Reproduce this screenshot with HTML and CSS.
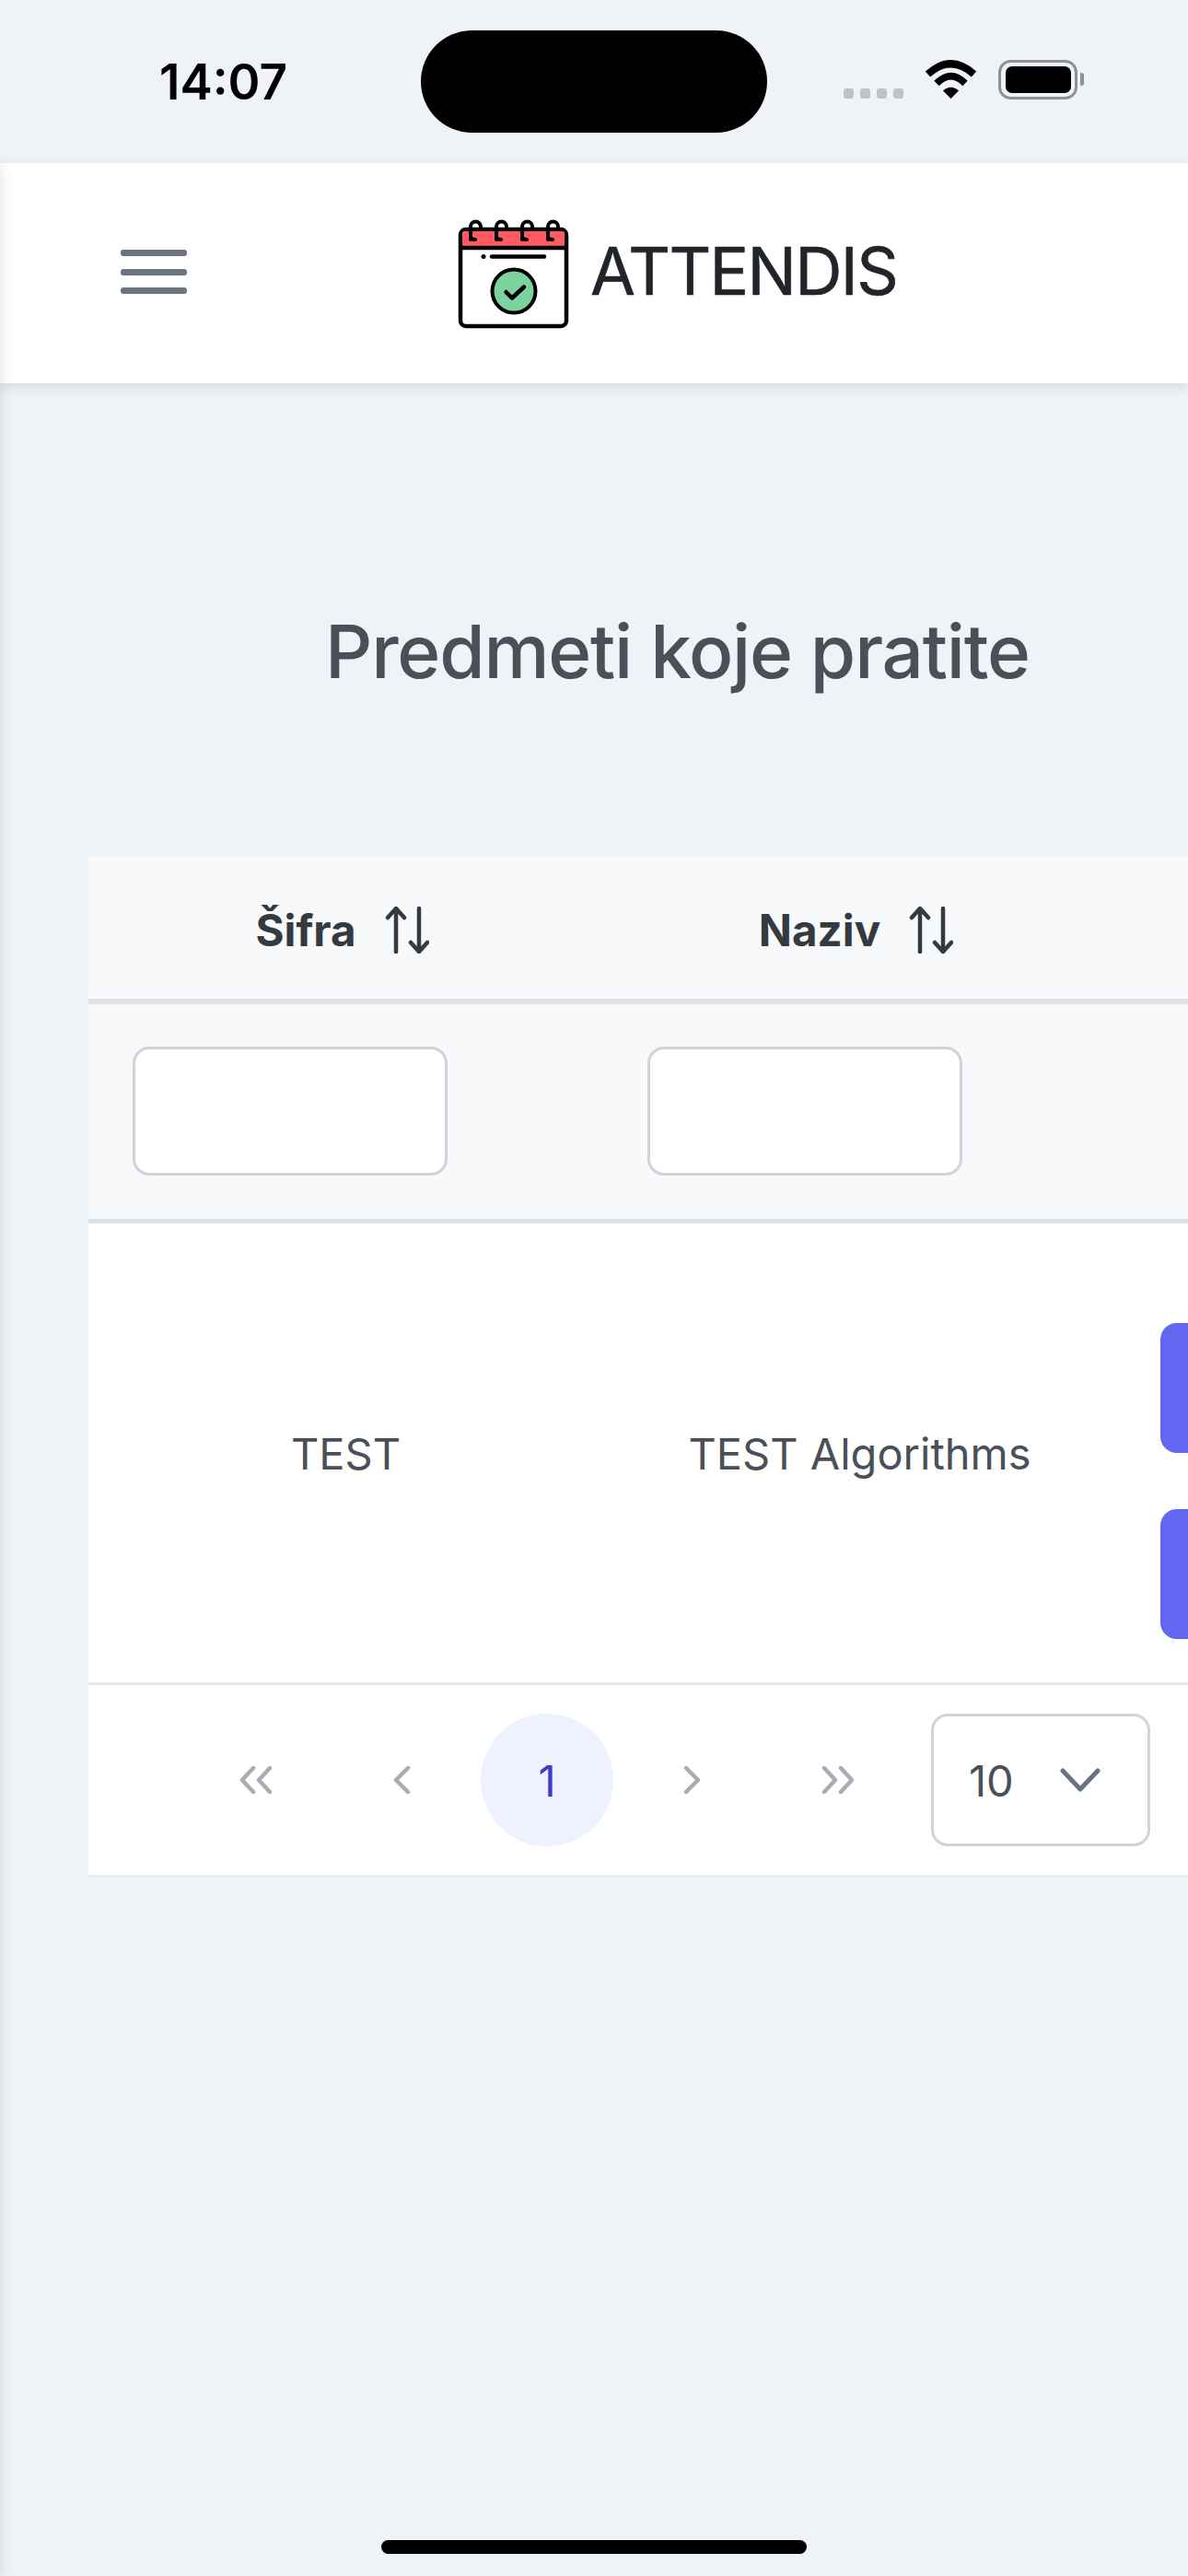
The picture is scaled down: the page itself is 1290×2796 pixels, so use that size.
FILE: index.html
```html
<!DOCTYPE html>
<html lang="hr">
<head>
<meta charset="utf-8">
<title>Attendis</title>
<link rel="stylesheet" href="styles.css">
</head>
<body>
<div class="status-bar">
  <span class="time">14:07</span>
  <span class="island"></span>
  <span class="signal"><i></i><i></i><i></i><i></i></span>
  <svg class="wifi" viewBox="0 0 57 42" width="57" height="42"><path d="M3.5 15.5Q28.5-7 53.5 15.5" fill="none" stroke="#000" stroke-width="8"/><path d="M13 25.500Q28.500 10 44 25.500" fill="none" stroke="#000" stroke-width="7.500"/><path d="M20 33.500Q28.500 26 37 33.500L28.500 42Z" fill="#000"/></svg>
  <svg class="battery" viewBox="0 0 93 43" width="93" height="43"><rect x="1.500" y="1.500" width="83" height="40" rx="12" fill="none" stroke="#8e9196" stroke-width="3"/><rect x="8" y="7" width="71" height="29" rx="7" fill="#000"/><path d="M89 14a7 7 0 0 1 0 14Z" fill="#8e9196"/></svg>
</div>

<header class="topbar">
  <button class="menu-btn" aria-label="Menu"><span></span><span></span><span></span></button>
  <div class="brand">
    <svg class="logo" viewBox="26 16 124 122" width="124" height="122">
      <rect x="30" y="29" width="115" height="105" rx="6" fill="#fff" stroke="#000" stroke-width="4.500"/>
      <path d="M32 48V33a2 2 0 0 1 2-2H141a2 2 0 0 1 2 2V48Z" fill="#ff5a5f"/>
      <path d="M30 49H145" stroke="#000" stroke-width="4.500"/>
      <g fill="none" stroke="#000" stroke-width="4" stroke-linecap="round">
        <path d="M41 40V26a5.500 5.500 0 0 1 11 0v3M41 36q0 4 5 4"/>
        <path d="M69 40V26a5.500 5.500 0 0 1 11 0v3M69 36q0 4 5 4"/>
        <path d="M97 40V26a5.500 5.500 0 0 1 11 0v3M97 36q0 4 5 4"/>
        <path d="M125 40V26a5.500 5.500 0 0 1 11 0v3M125 36q0 4 5 4"/>
        <path d="M64 58.500H121" stroke-width="4.500"/>
      </g>
      <circle cx="55" cy="58.500" r="2.500" fill="#000"/>
      <circle cx="88" cy="96" r="23.500" fill="#7dd3a0" stroke="#000" stroke-width="4"/>
      <path d="M79.500 97L86 103.500L99 91.500" fill="none" stroke="#000" stroke-width="4.500" stroke-linecap="round" stroke-linejoin="round"/>
    </svg>
    <span class="brand-name">ATTENDIS</span>
  </div>
</header>

<div class="side-shadow"></div>

<main class="content">
  <h1 class="page-title">Predmeti koje pratite</h1>
  <section class="card">
    <table class="data">
      <thead>
        <tr class="head-row">
          <th class="col-code"><span class="th-in">Šifra
            <svg class="sort" viewBox="0 0 48 51" width="48" height="51"><path d="M12 49V2M3 12l9-10 9 10M37 2V49M28 39l9 10 9-10" fill="none" stroke="#343a40" stroke-width="4.500" stroke-linecap="round" stroke-linejoin="round"/></svg>
          </span></th>
          <th class="col-name"><span class="th-in">Naziv
            <svg class="sort" viewBox="0 0 48 51" width="48" height="51"><path d="M12 49V2M3 12l9-10 9 10M37 2V49M28 39l9 10 9-10" fill="none" stroke="#343a40" stroke-width="4.500" stroke-linecap="round" stroke-linejoin="round"/></svg>
          </span></th>
          <th class="col-actions"></th>
        </tr>
        <tr class="filter-row">
          <th><input class="filter" type="text" aria-label="Šifra"></th>
          <th><input class="filter" type="text" aria-label="Naziv"></th>
          <th></th>
        </tr>
      </thead>
      <tbody>
        <tr class="body-row">
          <td>TEST</td>
          <td>TEST Algorithms</td>
          <td class="actions"><button class="action"></button><button class="action"></button></td>
        </tr>
      </tbody>
    </table>
    <div class="pager">
      <button class="page-btn"><svg viewBox="0 0 38 30" width="38" height="30"><path d="M16 2L4 15l12 13M34 2L22 15l12 13" class="chev"/></svg></button>
      <button class="page-btn"><svg viewBox="0 0 20 30" width="20" height="30"><path d="M17 2L4 15l13 13" class="chev"/></svg></button>
      <button class="page-btn current">1</button>
      <button class="page-btn"><svg viewBox="0 0 20 30" width="20" height="30"><path d="M3 2l13 13L3 28" class="chev"/></svg></button>
      <button class="page-btn"><svg viewBox="0 0 38 30" width="38" height="30"><path d="M4 2l12 13L4 28M22 2l12 13-12 13" class="chev"/></svg></button>
      <div class="per-page">
        <span>10</span>
        <svg viewBox="0 0 44 26" width="44" height="26"><path d="M3 3l19 20L41 3" fill="none" stroke="#6b7280" stroke-width="5" stroke-linecap="round" stroke-linejoin="round"/></svg>
      </div>
    </div>
  </section>
</main>

<div class="home-indicator"></div>
</body>
</html>
```

FILE: styles.css
```css
* { box-sizing: border-box; }
html, body { margin: 0; padding: 0; }
body {
  position: relative;
  width: 1290px;
  height: 2796px;
  overflow: hidden;
  background: #eff2f7;
  font-family: Inter, "Liberation Sans", sans-serif;
  color: #495057;
}

.status-bar {
  height: 177px;
  display: flex;
  align-items: flex-start;
  padding-left: 173px;
  background: #eff2f7;
}
.time {
  width: 284px;
  margin-top: 57px;
  font-size: 53px;
  line-height: 64px;
  font-weight: 600;
  color: #000;
}
.island {
  width: 376px;
  height: 111px;
  margin-top: 33px;
  border-radius: 56px;
  background: #000;
}
.signal {
  display: flex;
  gap: 7px;
  margin: 96px 0 0 83px;
}
.signal i {
  width: 11px;
  height: 11px;
  border-radius: 3px;
  background: #bfc3c8;
}
.wifi { margin: 65px 0 0 23px; }
.battery { margin: 65px 0 0 23px; }

.topbar {
  position: relative;
  height: 239px;
  display: flex;
  align-items: center;
  padding-left: 131px;
  background: #fff;
  box-shadow: 0 4px 12px rgba(40, 50, 70, 0.12);
}
.menu-btn {
  width: 72px;
  height: 48px;
  margin-bottom: 3px;
  padding: 0;
  border: 0;
  background: none;
  display: flex;
  flex-direction: column;
  justify-content: space-between;
}
.menu-btn span {
  display: block;
  height: 7px;
  border-radius: 3px;
  background: #6c757d;
}
.brand {
  display: flex;
  align-items: center;
  margin-left: 293px;
  gap: 21px;
}
.logo { display: block; }
.brand-name {
  margin-bottom: 5px;
  font-size: 71px;
  line-height: 84px;
  font-weight: 400;
  color: #212529;
  letter-spacing: -1.700px;
  -webkit-text-stroke: 0.6px #212529;
}

.side-shadow {
  position: absolute;
  left: -60px;
  top: 177px;
  bottom: 0;
  width: 60px;
  box-shadow: 0 0 14px rgba(40, 50, 70, 0.14);
}

.content { padding: 241px 0 0 96px; }
.page-title {
  margin: 0 0 0 257px;
  height: 100px;
  font-size: 80px;
  line-height: 100px;
  font-weight: 500;
  letter-spacing: -1.200px;
  color: #495057;
  white-space: nowrap;
}
.card {
  margin-top: 172px;
  overflow: hidden;
}
.data {
  width: 1500px;
  table-layout: fixed;
  border-collapse: separate;
  border-spacing: 0;
}
.col-code { width: 559px; }
.col-name { width: 557px; }
.head-row th {
  height: 161px;
  background: #f8f9fa;
  border-bottom: 6px solid #dee2e6;
  font-size: 47.500px;
  font-weight: 700;
  color: #343a40;
  padding: 6px 48px 0;
}
.th-in {
  display: inline-flex;
  align-items: center;
  gap: 31px;
  margin-right: 8px;
}
.sort { display: block; }
.filter-row th {
  height: 238px;
  background: #f8f9fa;
  border-bottom: 5px solid #dee2e6;
  padding: 46px 48px 47px;
  text-align: left;
}
.filter {
  display: block;
  width: 342px;
  height: 140px;
  border: 3.500px solid #ced4da;
  border-radius: 18px;
  background: #fff;
}
.body-row td {
  height: 501px;
  background: #fff;
  border-bottom: 3px solid #e5e7eb;
  text-align: center;
  font-size: 47px;
  font-weight: 400;
  color: #495057;
  padding: 48px;
  vertical-align: middle;
}
.body-row td.actions {
  padding: 0 48px 47px;
  vertical-align: bottom;
  text-align: left;
}
.action {
  display: block;
  width: 240px;
  height: 141px;
  margin-top: 61px;
  border: 0;
  border-radius: 18px;
  background: #6366f1;
}
.pager {
  display: flex;
  align-items: center;
  gap: 14px;
  padding: 31px 0 31px 110px;
  background: #fff;
  border-bottom: 3px solid #e9ecef;
}
.page-btn {
  width: 144px;
  height: 144px;
  padding: 0;
  border: 0;
  border-radius: 50%;
  background: none;
  display: flex;
  align-items: center;
  justify-content: center;
  font-family: inherit;
  font-size: 47px;
  color: #4338ca;
}
.page-btn.current { background: #eef2ff; }
.chev {
  fill: none;
  stroke: #a8adb3;
  stroke-width: 4.500;
  stroke-linecap: round;
  stroke-linejoin: round;
}
.per-page {
  width: 238px;
  height: 144px;
  margin-left: 15px;
  padding: 0 51px 0 38px;
  display: flex;
  align-items: center;
  justify-content: space-between;
  border: 3.500px solid #ced4da;
  border-radius: 18px;
  font-size: 47px;
  color: #495057;
}

.home-indicator {
  position: absolute;
  left: 414px;
  top: 2757px;
  width: 462px;
  height: 15px;
  border-radius: 8px;
  background: #000;
}
```
